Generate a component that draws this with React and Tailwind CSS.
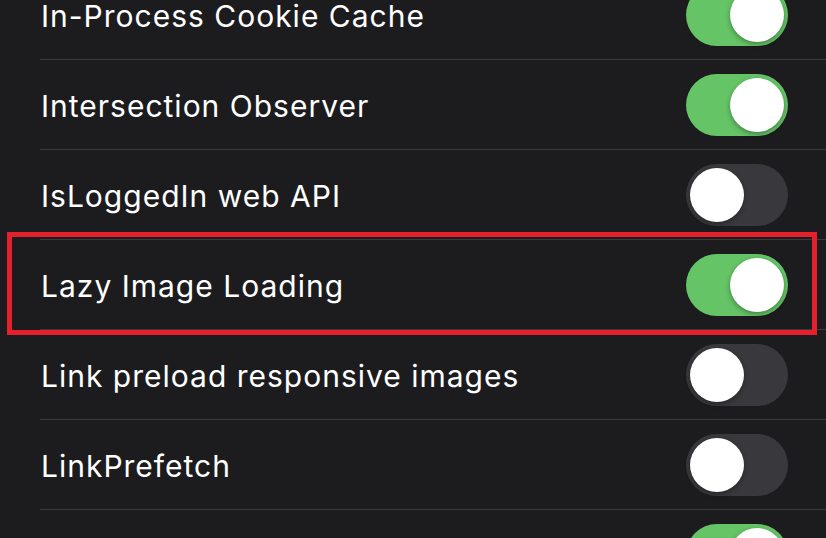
const rows = [
    { label: "In-Process Cookie Cache", on: true },
    { label: "Intersection Observer", on: true },
    { label: "IsLoggedIn web API", on: false },
    { label: "Lazy Image Loading", on: true, marked: true },
    { label: "Link preload responsive images", on: false },
    { label: "LinkPrefetch", on: false },
    { label: "Media Capabilities Extensions", on: true },
];

function Toggle({ on }) {
    return (
        <div
            className={
                "w-[102px] h-[62px] rounded-full p-[4px] flex shrink-0 " +
                (on ? "bg-[#64c466] justify-end" : "bg-[#39393d] justify-start")
            }
        >
            <div className="w-[54px] h-[54px] rounded-full bg-white shadow-[0_2px_5px_rgba(0,0,0,0.35)]" />
        </div>
    );
}

export default function App() {
    return (
        <div
            className="h-[538px] w-[826px] overflow-hidden bg-[#1c1c1e] text-white"
            style={{ fontFamily: "Inter, 'Noto Sans', sans-serif" }}
        >
            <div className="-mt-[30px] flex flex-col">
                {rows.map((row) => (
                    <div key={row.label} className="relative pl-[40px]">
                        <div className="flex h-[90px] items-center justify-between border-b border-[#3a3a3c] pr-[38px]">
                            <span className="pl-[1px] pt-[4px] text-[30px] tracking-[1px] whitespace-nowrap">{row.label}</span>
                            <Toggle on={row.on} />
                        </div>
                        {row.marked && (
                            <div className="absolute left-[7px] right-[9px] -top-[8px] -bottom-[5px] border-[5px] border-[#e3202b]" />
                        )}
                    </div>
                ))}
            </div>
        </div>
    );
}
